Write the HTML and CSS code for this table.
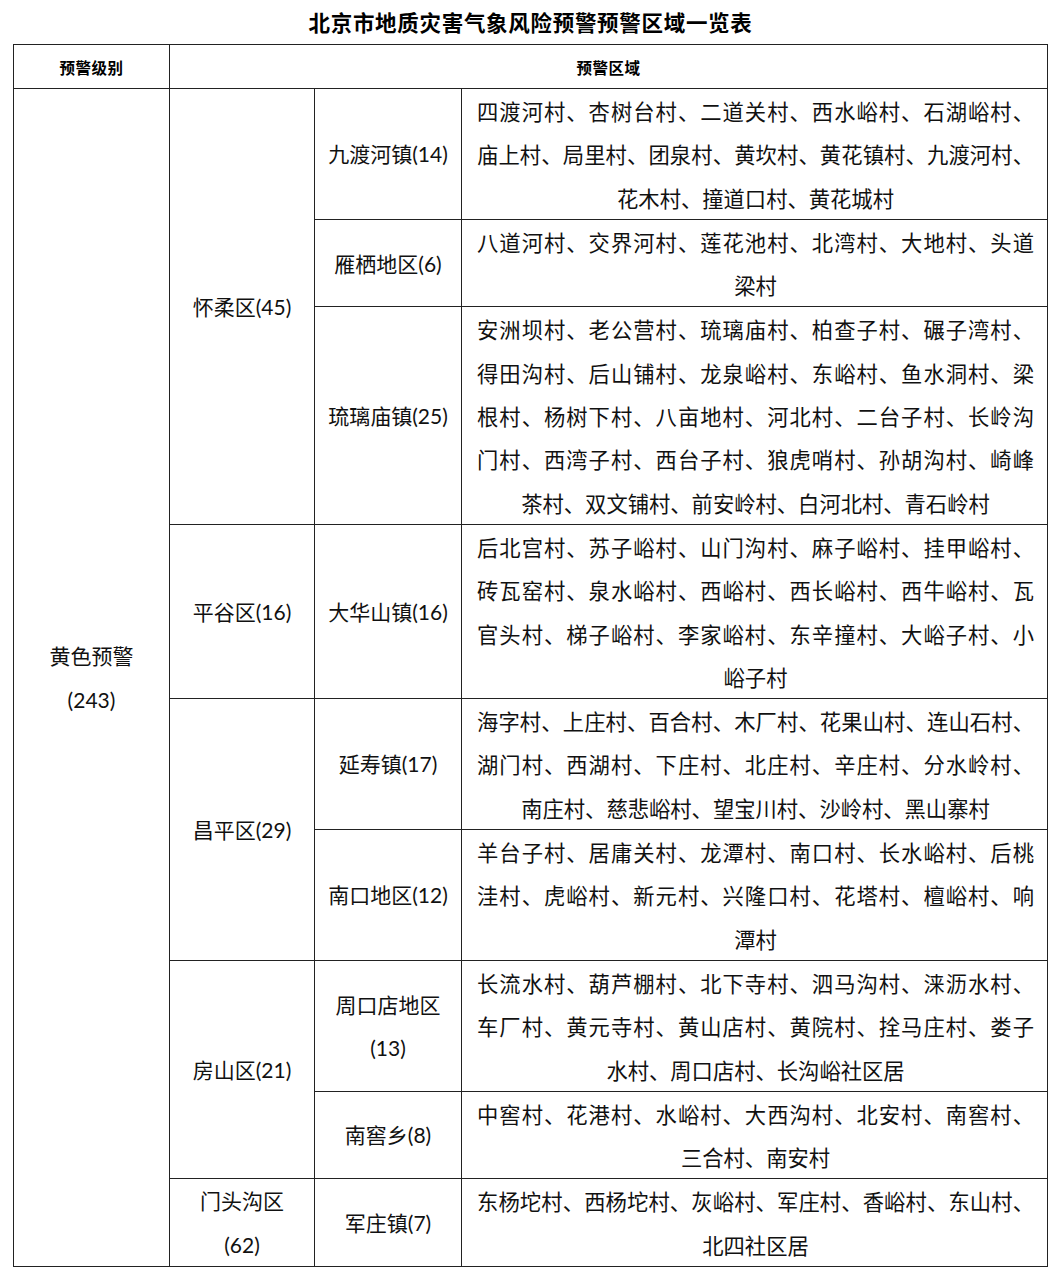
FILE: index.html
```html
<!DOCTYPE html>
<html lang="zh-CN">
<head>
<meta charset="utf-8">
<title>北京市地质灾害气象风险预警预警区域一览表</title>
<link rel="stylesheet" href="styles.css">
</head>
<body>
<h1 class="title">北京市地质灾害气象风险预警预警区域一览表</h1>
<table class="tbl">
  <colgroup>
    <col class="c1"><col class="c2"><col class="c3"><col class="c4">
  </colgroup>
  <thead>
    <tr class="head">
      <th>预警级别</th>
      <th colspan="3">预警区域</th>
    </tr>
  </thead>
  <tbody>
    <tr>
      <td rowspan="9" class="name">黄色预警<br>(243)</td>
      <td rowspan="3" class="name">怀柔区(45)</td>
      <td class="name">九渡河镇(14)</td>
      <td class="area">
        <div class="ln">四渡河村、杏树台村、二道关村、西水峪村、石湖峪村、</div>
        <div class="ln">庙上村、局里村、团泉村、黄坎村、黄花镇村、九渡河村、</div>
        <div class="ln end">花木村、撞道口村、黄花城村</div>
      </td>
    </tr>
    <tr>
      <td class="name">雁栖地区(6)</td>
      <td class="area">
        <div class="ln">八道河村、交界河村、莲花池村、北湾村、大地村、头道</div>
        <div class="ln end">梁村</div>
      </td>
    </tr>
    <tr>
      <td class="name">琉璃庙镇(25)</td>
      <td class="area">
        <div class="ln">安洲坝村、老公营村、琉璃庙村、柏查子村、碾子湾村、</div>
        <div class="ln">得田沟村、后山铺村、龙泉峪村、东峪村、鱼水洞村、梁</div>
        <div class="ln">根村、杨树下村、八亩地村、河北村、二台子村、长岭沟</div>
        <div class="ln">门村、西湾子村、西台子村、狼虎哨村、孙胡沟村、崎峰</div>
        <div class="ln end">茶村、双文铺村、前安岭村、白河北村、青石岭村</div>
      </td>
    </tr>
    <tr>
      <td class="name">平谷区(16)</td>
      <td class="name">大华山镇(16)</td>
      <td class="area">
        <div class="ln">后北宫村、苏子峪村、山门沟村、麻子峪村、挂甲峪村、</div>
        <div class="ln">砖瓦窑村、泉水峪村、西峪村、西长峪村、西牛峪村、瓦</div>
        <div class="ln">官头村、梯子峪村、李家峪村、东辛撞村、大峪子村、小</div>
        <div class="ln end">峪子村</div>
      </td>
    </tr>
    <tr>
      <td rowspan="2" class="name">昌平区(29)</td>
      <td class="name">延寿镇(17)</td>
      <td class="area">
        <div class="ln">海字村、上庄村、百合村、木厂村、花果山村、连山石村、</div>
        <div class="ln">湖门村、西湖村、下庄村、北庄村、辛庄村、分水岭村、</div>
        <div class="ln end">南庄村、慈悲峪村、望宝川村、沙岭村、黑山寨村</div>
      </td>
    </tr>
    <tr>
      <td class="name">南口地区(12)</td>
      <td class="area">
        <div class="ln">羊台子村、居庸关村、龙潭村、南口村、长水峪村、后桃</div>
        <div class="ln">洼村、虎峪村、新元村、兴隆口村、花塔村、檀峪村、响</div>
        <div class="ln end">潭村</div>
      </td>
    </tr>
    <tr>
      <td rowspan="2" class="name">房山区(21)</td>
      <td class="name">周口店地区<br>(13)</td>
      <td class="area">
        <div class="ln">长流水村、葫芦棚村、北下寺村、泗马沟村、涞沥水村、</div>
        <div class="ln">车厂村、黄元寺村、黄山店村、黄院村、拴马庄村、娄子</div>
        <div class="ln end">水村、周口店村、长沟峪社区居</div>
      </td>
    </tr>
    <tr>
      <td class="name">南窖乡(8)</td>
      <td class="area">
        <div class="ln">中窖村、花港村、水峪村、大西沟村、北安村、南窖村、</div>
        <div class="ln end">三合村、南安村</div>
      </td>
    </tr>
    <tr>
      <td class="name">门头沟区<br>(62)</td>
      <td class="name">军庄镇(7)</td>
      <td class="area">
        <div class="ln">东杨坨村、西杨坨村、灰峪村、军庄村、香峪村、东山村、</div>
        <div class="ln end">北四社区居</div>
      </td>
    </tr>
  </tbody>
</table>
</body>
</html>
```
FILE: styles.css
```css
html, body {
  margin: 0;
  padding: 0;
  background: #ffffff;
}
body {
  font-family: Lato, "Noto Sans CJK SC", sans-serif;
  color: #000;
}
.title {
  margin: 0;
  height: 44px;
  line-height: 44px;
  text-align: center;
  font-family: "Noto Sans CJK SC", sans-serif;
  font-size: 21.5px;
  font-weight: 700;
  letter-spacing: 0.7px;
}
.tbl {
  margin-left: 13px;
  width: 1034px;
  table-layout: fixed;
  border-collapse: collapse;
  border: 1px solid #444;
}
.c1 { width: 156px; }
.c2 { width: 145px; }
.c3 { width: 147px; }
.c4 { width: 586px; }
.tbl th, .tbl td {
  border: 1px solid #222;
  padding: 0;
  vertical-align: middle;
  text-align: center;
}
.head th {
  height: 43px;
  font-family: "Noto Sans CJK SC", sans-serif;
  font-size: 15.5px;
  font-weight: 700;
  letter-spacing: 0.5px;
}
.name {
  font-size: 21px;
  line-height: 43.3px;
  color: #111;
}
.area {
  font-size: 21.3px;
  line-height: 43.3px;
  padding: 0 13px 0 15px !important;
  color: #111;
}
.ln {
  white-space: nowrap;
  text-align: justify;
  text-align-last: justify;
  font-family: "Noto Sans CJK SC", sans-serif;
}
.ln.end {
  text-align: center;
  text-align-last: center;
}
```
